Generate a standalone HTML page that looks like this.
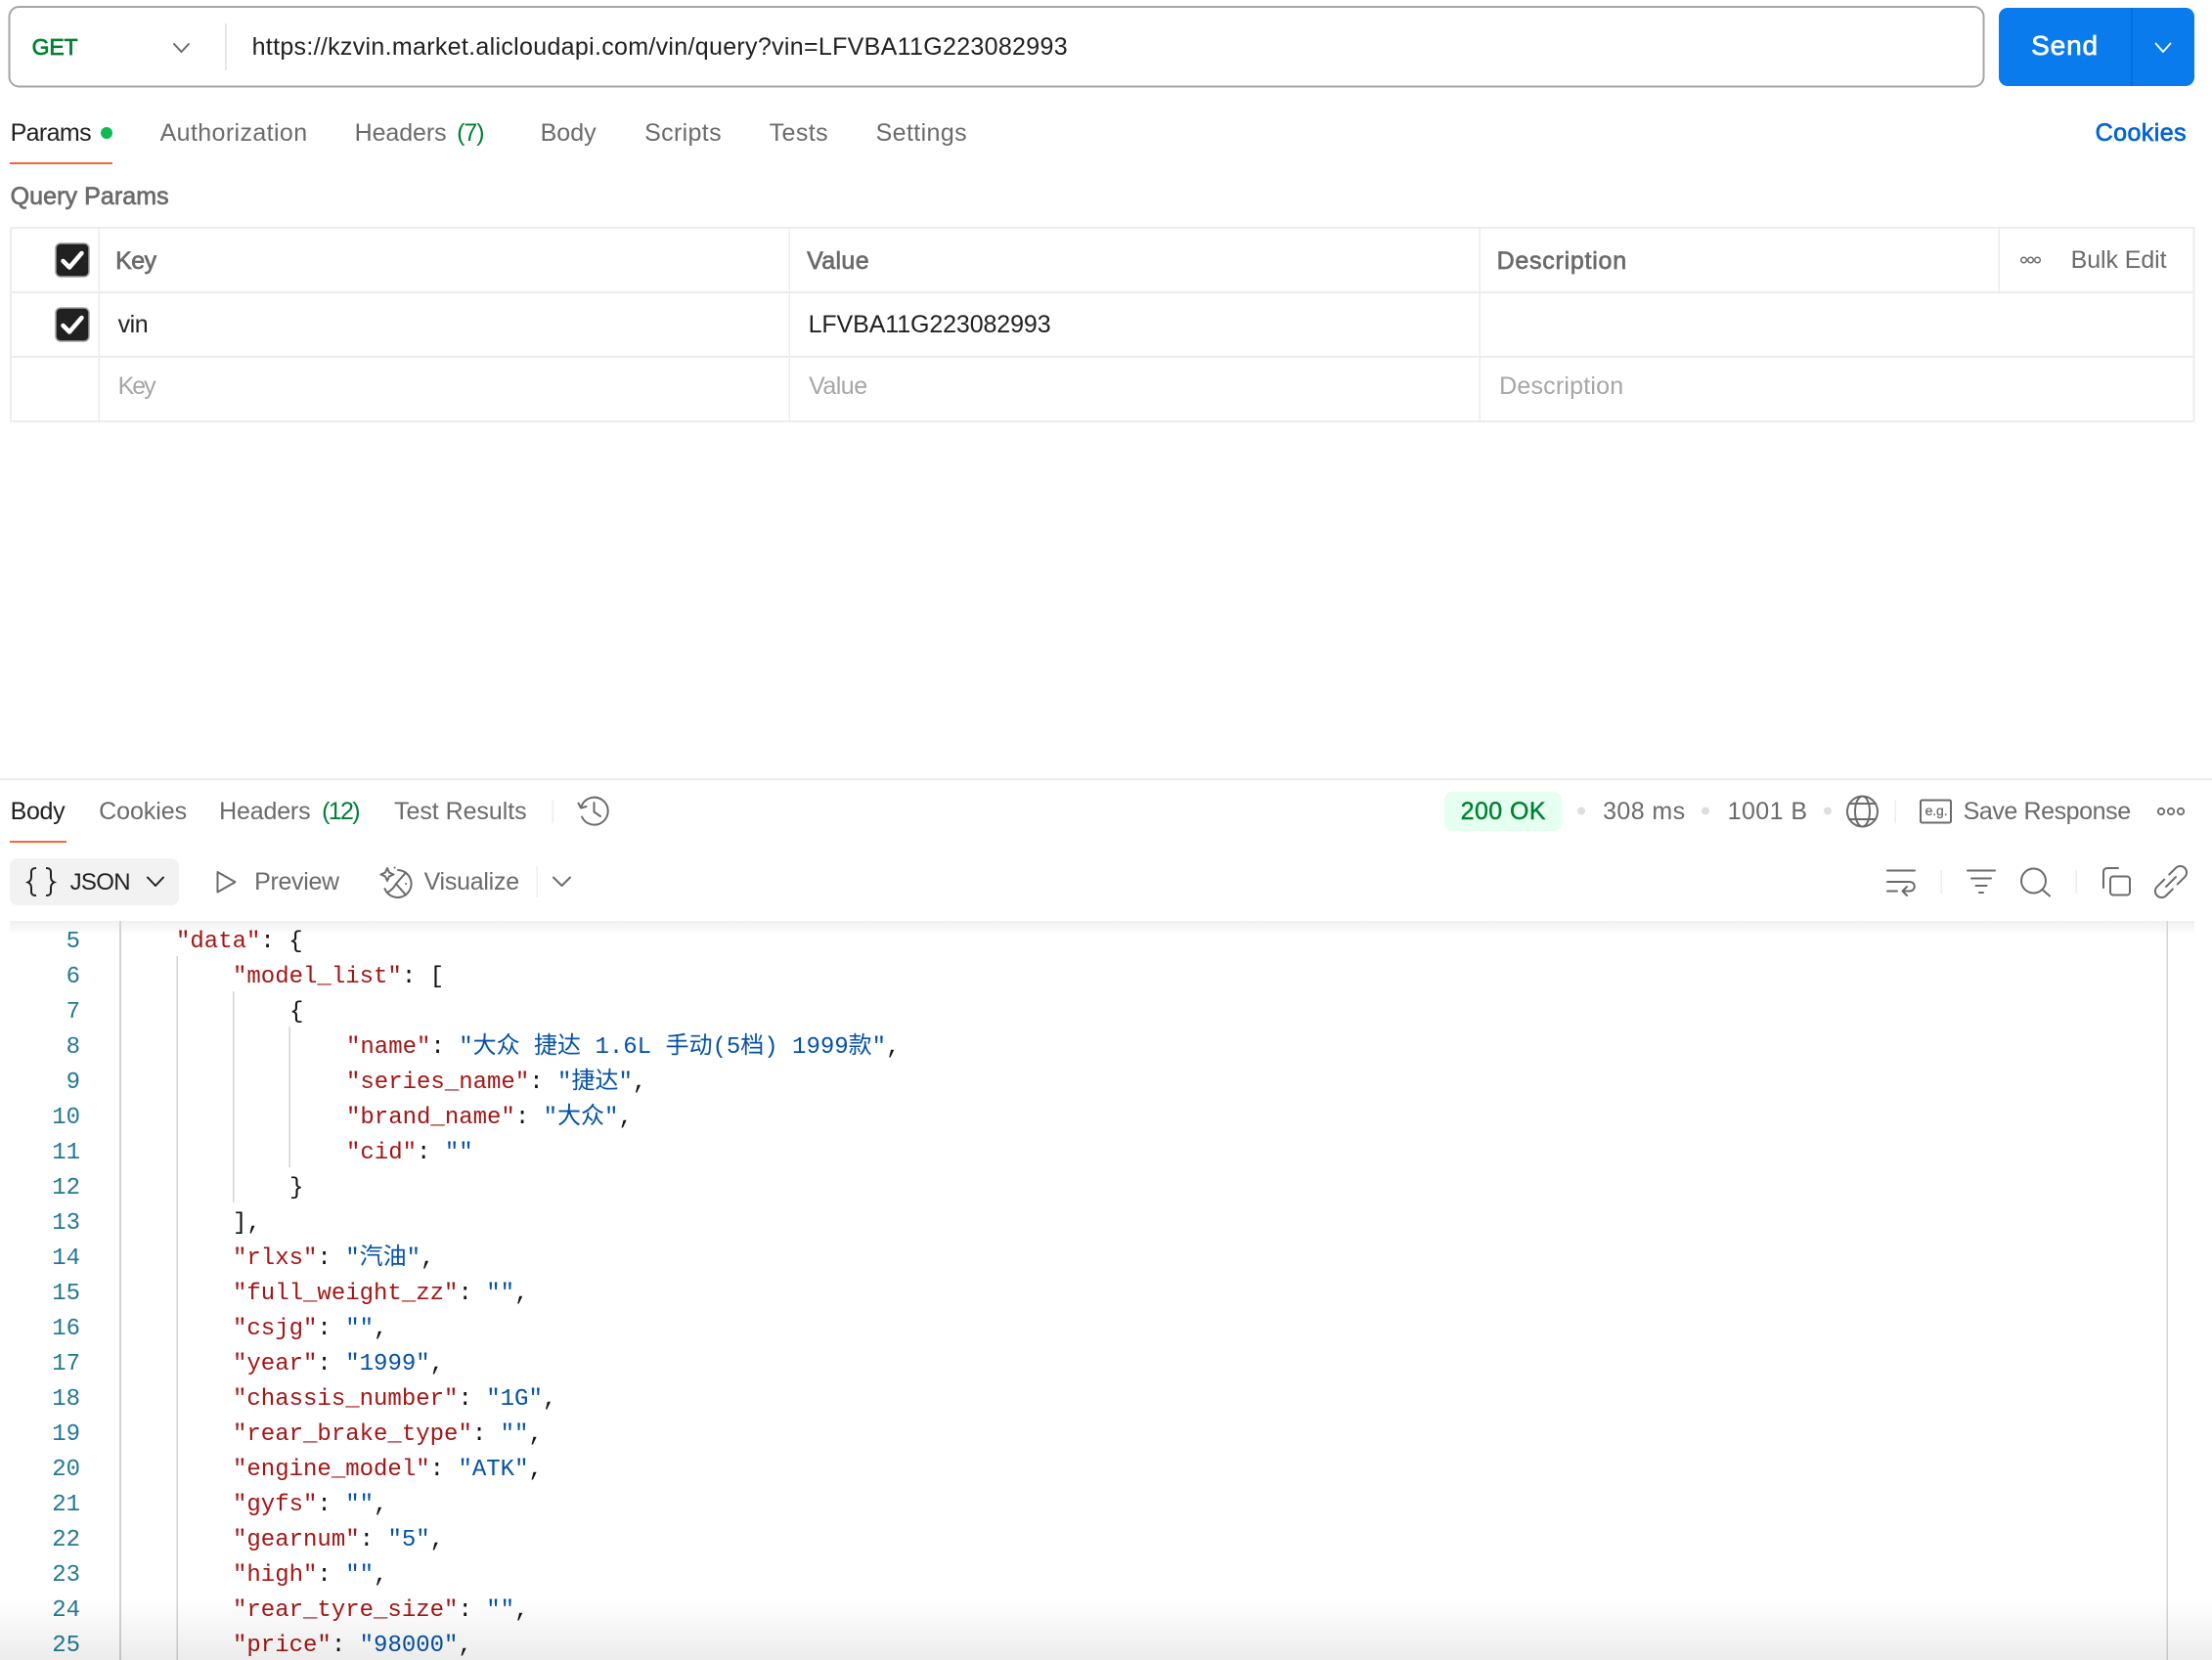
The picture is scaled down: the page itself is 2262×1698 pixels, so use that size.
<!DOCTYPE html>
<html lang="en">
<head>
<meta charset="utf-8">
<title>Postman request</title>
<style>
html,body{margin:0;padding:0;background:#fff;width:2262px;height:1698px;overflow:hidden}
svg{display:block}
text{font-family:"Liberation Sans","Noto Sans CJK SC",sans-serif;font-size:25px;white-space:pre;transform:translateX(-.4px)}
.n{fill:#6b6b6b}
.d{fill:#212121}
.g{fill:#007f31}
.p{fill:#a6a6a6}
.sb{fill:#6b6b6b;stroke:#6b6b6b;stroke-width:.7px}
.c text{font-family:"Liberation Mono","Noto Sans CJK SC",monospace;font-size:24px;fill:#111;transform:translateX(-1px)}
.c text.ln{fill:#237893;text-anchor:end;transform:none}
.k{fill:#a31515}
.v{fill:#0451a5}
.i{fill:none;stroke:#6b6b6b;stroke-width:2;stroke-linecap:round;stroke-linejoin:round}
.b{fill:#ededed}
.gd{fill:#d3d3d3}
</style>
</head>
<body>
<svg xmlns="http://www.w3.org/2000/svg" width="2262" height="1698" viewBox="0 0 2262 1698">
<defs>
<linearGradient id="top" x1="0" y1="0" x2="0" y2="1"><stop offset="0" stop-color="#000" stop-opacity=".06"/><stop offset="1" stop-color="#000" stop-opacity="0"/></linearGradient>
<linearGradient id="bot" x1="0" y1="0" x2="0" y2="1"><stop offset="0" stop-color="#000" stop-opacity="0"/><stop offset="1" stop-color="#000" stop-opacity=".075"/></linearGradient>
</defs>
<rect width="2262" height="1698" fill="#fff"/>

<!-- URL bar -->
<rect x="9.5" y="7" width="2019" height="81.5" rx="10" fill="#fff" stroke="#a6a6a6" stroke-width="2"/>
<text x="33" y="56" class="g" stroke="#007f31" stroke-width=".7" style="font-size:23px" textLength="47">GET</text>
<path d="M178 45l7.500 8 7.500-8" class="i" stroke-width="1.800"/>
<rect x="230" y="24" width="2" height="48" fill="#e6e6e6"/>
<text x="258" y="56" class="d" textLength="834">https://kzvin.market.alicloudapi.com/vin/query?vin=LFVBA11G223082993</text>

<!-- Send -->
<rect x="2044" y="8" width="200" height="80" rx="9" fill="#097bed"/>
<rect x="2179" y="8" width="1.500" height="80" fill="#0869cf"/>
<text x="2077.500" y="56" fill="#fff" stroke="#fff" stroke-width=".7" style="font-size:28px" textLength="68">Send</text>
<path d="M2204.500 44.500l7.500 8.500 7.500-8.500" fill="none" stroke="#fff" stroke-width="1.800" stroke-linecap="round" stroke-linejoin="round"/>

<!-- Request tabs -->
<text x="11" y="144" class="d" textLength="83">Params</text>
<circle cx="109" cy="136" r="6" fill="#0cbb52"/>
<rect x="10" y="166" width="105" height="2" fill="#f2693a"/>
<text x="164" y="144" class="n" textLength="150.500">Authorization</text>
<text x="363" y="144" class="n" textLength="94">Headers</text>
<text x="467.500" y="144" class="g" textLength="28.500">(7)</text>
<text x="553" y="144" class="n" textLength="57">Body</text>
<text x="659.500" y="144" class="n" textLength="78.500">Scripts</text>
<text x="787" y="144" class="n" textLength="60">Tests</text>
<text x="896" y="144" class="n" textLength="93">Settings</text>
<text x="2143" y="144" fill="#0265d2" stroke="#0265d2" stroke-width=".7" textLength="93">Cookies</text>

<text x="11" y="209" class="sb" textLength="162">Query Params</text>

<!-- Params table -->
<g>
<rect x="10" y="232" width="2234" height="2" class="b"/>
<rect x="10" y="298" width="2234" height="2" class="b"/>
<rect x="10" y="364" width="2234" height="2" class="b"/>
<rect x="10" y="430" width="2234" height="2" class="b"/>
<rect x="10" y="232" width="2" height="200" class="b"/>
<rect x="2242.500" y="232" width="2" height="200" class="b"/>
<rect x="100.500" y="232" width="1.500" height="200" class="b"/>
<rect x="806.500" y="232" width="1.500" height="200" class="b"/>
<rect x="1512.500" y="232" width="1.500" height="200" class="b"/>
<rect x="2043.500" y="232" width="1.500" height="66" class="b"/>
</g>
<rect x="57" y="249" width="34" height="34" rx="5" fill="#212121" stroke="#a0a0a0" stroke-width="1.500"/>
<path d="M64.500 267l6.500 6.500L83.500 259" fill="none" stroke="#fff" stroke-width="4.500" stroke-linecap="round" stroke-linejoin="round"/>
<rect x="57" y="315" width="34" height="34" rx="5" fill="#212121" stroke="#a0a0a0" stroke-width="1.500"/>
<path d="M64.500 333l6.500 6.500L83.500 325" fill="none" stroke="#fff" stroke-width="4.500" stroke-linecap="round" stroke-linejoin="round"/>

<text x="118.500" y="275" class="sb" textLength="42">Key</text>
<text x="825.500" y="275" class="sb" textLength="63.500">Value</text>
<text x="1531" y="275" class="sb" textLength="132.500">Description</text>
<g fill="none" stroke="#6b6b6b" stroke-width="1.500">
<circle cx="2069.500" cy="266" r="2.800"/><circle cx="2076.500" cy="266" r="2.800"/><circle cx="2083.500" cy="266" r="2.800"/>
</g>
<text x="2118" y="274" class="n" textLength="98">Bulk Edit</text>

<text x="121" y="340" class="d" textLength="31">vin</text>
<text x="827" y="340" class="d" textLength="248">LFVBA11G223082993</text>

<text x="121" y="403" class="p" textLength="39">Key</text>
<text x="827.500" y="403" class="p" textLength="60">Value</text>
<text x="1533.500" y="403" class="p" textLength="127">Description</text>

<!-- Response header -->
<rect x="0" y="796" width="2262" height="2" class="b"/>
<text x="11" y="838" class="d" textLength="56">Body</text>
<rect x="10" y="860" width="58" height="2" fill="#f2693a"/>
<text x="101.500" y="838" class="n" textLength="90">Cookies</text>
<text x="224.500" y="838" class="n" textLength="93.500">Headers</text>
<text x="329.500" y="838" class="g" textLength="39.500">(12)</text>
<text x="403.500" y="838" class="n" textLength="135.500">Test Results</text>
<rect x="564.500" y="818" width="1.500" height="24" class="b"/>
<path d="M595 835.500A14 14 0 1 0 594.500 825M591.500 821.500l2.500 5 5.500-1.500M607.500 821v9.500l6.500 4.500" class="i"/>

<rect x="1477" y="810" width="120" height="40" rx="8" fill="#e5fff0"/>
<text x="1494" y="838" fill="#007f31" stroke="#007f31" stroke-width=".4" textLength="87">200 OK</text>
<circle cx="1617" cy="829.500" r="4" fill="#dedede"/>
<text x="1639.500" y="838" class="n" textLength="84">308 ms</text>
<circle cx="1744" cy="829.500" r="4" fill="#dedede"/>
<text x="1767" y="838" class="n" textLength="81.500">1001 B</text>
<circle cx="1869" cy="829.500" r="4" fill="#dedede"/>
<g class="i">
<circle cx="1904.500" cy="830" r="15.500"/>
<ellipse cx="1904.500" cy="830" rx="7.500" ry="15.500"/>
<path d="M1891 822h27M1891 838h27"/>
</g>
<rect x="1937.500" y="818" width="1.500" height="24" class="b"/>
<rect x="1964" y="818.500" width="31" height="23" rx="1.500" class="i"/>
<text x="1969" y="834" fill="#6b6b6b" stroke="#6b6b6b" stroke-width=".3" style="font-size:14px" textLength="23">e.g.</text>
<text x="2008" y="838" class="n" textLength="171.500">Save Response</text>
<g fill="none" stroke="#6b6b6b" stroke-width="1.800">
<circle cx="2210" cy="830" r="3.200"/><circle cx="2220" cy="830" r="3.200"/><circle cx="2230" cy="830" r="3.200"/>
</g>

<!-- Response toolbar -->
<rect x="10" y="878" width="173" height="48" rx="8" fill="#f2f2f2"/>
<path d="M37 888c-3.500 0-5 1-5 4v5c0 3-1 4.500-3.500 5.500 2.500 1 3.500 2.500 3.500 5.500v4c0 3 1.500 4 5 4M47 888c3.500 0 5 1 5 4v5c0 3 1 4.500 3.500 5.500-2.500 1-3.500 2.500-3.500 5.500v4c0 3-1.500 4-5 4" fill="none" stroke="#212121" stroke-width="2"/>
<text x="72" y="910" class="d" style="font-size:24px" textLength="62">JSON</text>
<path d="M151 897.500l8 8.500 8-8.500" fill="none" stroke="#212121" stroke-width="2" stroke-linecap="round" stroke-linejoin="round"/>
<path d="M222.500 892v20.500l18-10.200z" class="i"/>
<text x="260.500" y="910" class="n" textLength="87">Preview</text>
<g class="i">
<path d="M407 890A14 14 0 1 1 393.500 909"/>
<path d="M396 888l2 4.500 4.500 2-4.500 2-2 4.500-2-4.500-4.500-2 4.500-2z"/>
<path d="M403.500 887.500h.1"/>
<path d="M415 892.500L405 904 415 915.500M396 913c4-2 6.500-4.500 9-9M415 904h.1"/>
</g>
<text x="434" y="910" class="n" textLength="97.500">Visualize</text>
<rect x="548.500" y="886" width="1.500" height="32" class="b"/>
<path d="M566 897.500l8.500 8.500 8.500-8.500" class="i"/>

<g class="i">
<path d="M1930 890.500h28M1930 902h22.500c7 0 7 9.500 0 9.500h-6.500M1950 907l-4.500 4.500 4.500 4.500M1930 911.500h10"/>
</g>
<rect x="1984.500" y="890" width="1.500" height="24" class="b"/>
<g class="i">
<path d="M2012 890.500h28M2016 898.500h20M2020.500 906h11M2024 913h4"/>
</g>
<g class="i">
<circle cx="2079.500" cy="901" r="12.500"/>
<path d="M2088.500 910l7.500 6.500"/>
</g>
<rect x="2122.500" y="890" width="1.500" height="24" class="b"/>
<g class="i">
<path d="M2151 908v-16c0-2.500 1.500-4 4-4h11"/>
<rect x="2158" y="896.500" width="20" height="19" rx="3"/>
</g>
<g class="i" transform="rotate(-45 2220 902)">
<path d="M2217 895.500h-10.500a6.500 6.500 0 0 0 0 13h9.500M2224 895.500h9.500a6.500 6.500 0 0 1 0 13H2223M2213 902h14"/>
</g>

<!-- Editor shadow + guides -->
<rect x="10" y="942" width="2234" height="14" fill="url(#top)"/>
<rect x="122" y="942" width="2" height="756" class="gd"/>
<rect x="180.500" y="978" width="1.500" height="720" class="gd"/>
<rect x="238" y="1014" width="1.500" height="216" class="gd"/>
<rect x="295.500" y="1050" width="1.500" height="144" class="gd"/>
<rect x="2215.500" y="942" width="1.500" height="756" fill="#d6d6d6"/>

<!-- Code -->
<g class="c">
<text class="ln" x="82" y="969">5</text>
<text class="ln" x="82" y="1005">6</text>
<text class="ln" x="82" y="1041">7</text>
<text class="ln" x="82" y="1077">8</text>
<text class="ln" x="82" y="1113">9</text>
<text class="ln" x="82" y="1149">10</text>
<text class="ln" x="82" y="1185">11</text>
<text class="ln" x="82" y="1221">12</text>
<text class="ln" x="82" y="1257">13</text>
<text class="ln" x="82" y="1293">14</text>
<text class="ln" x="82" y="1329">15</text>
<text class="ln" x="82" y="1365">16</text>
<text class="ln" x="82" y="1401">17</text>
<text class="ln" x="82" y="1437">18</text>
<text class="ln" x="82" y="1473">19</text>
<text class="ln" x="82" y="1509">20</text>
<text class="ln" x="82" y="1545">21</text>
<text class="ln" x="82" y="1581">22</text>
<text class="ln" x="82" y="1617">23</text>
<text class="ln" x="82" y="1653">24</text>
<text class="ln" x="82" y="1689">25</text>

<text x="181" y="969"><tspan class="k">"data"</tspan>: {</text>
<text x="239" y="1005"><tspan class="k">"model_list"</tspan>: [</text>
<text x="297" y="1041">{</text>
<text x="355" y="1077"><tspan class="k">"name"</tspan>: <tspan class="v">"大众 捷达 1.6L 手动(5档) 1999款"</tspan>,</text>
<text x="355" y="1113"><tspan class="k">"series_name"</tspan>: <tspan class="v">"捷达"</tspan>,</text>
<text x="355" y="1149"><tspan class="k">"brand_name"</tspan>: <tspan class="v">"大众"</tspan>,</text>
<text x="355" y="1185"><tspan class="k">"cid"</tspan>: <tspan class="v">""</tspan></text>
<text x="297" y="1221">}</text>
<text x="239" y="1257">],</text>
<text x="239" y="1293"><tspan class="k">"rlxs"</tspan>: <tspan class="v">"汽油"</tspan>,</text>
<text x="239" y="1329"><tspan class="k">"full_weight_zz"</tspan>: <tspan class="v">""</tspan>,</text>
<text x="239" y="1365"><tspan class="k">"csjg"</tspan>: <tspan class="v">""</tspan>,</text>
<text x="239" y="1401"><tspan class="k">"year"</tspan>: <tspan class="v">"1999"</tspan>,</text>
<text x="239" y="1437"><tspan class="k">"chassis_number"</tspan>: <tspan class="v">"1G"</tspan>,</text>
<text x="239" y="1473"><tspan class="k">"rear_brake_type"</tspan>: <tspan class="v">""</tspan>,</text>
<text x="239" y="1509"><tspan class="k">"engine_model"</tspan>: <tspan class="v">"ATK"</tspan>,</text>
<text x="239" y="1545"><tspan class="k">"gyfs"</tspan>: <tspan class="v">""</tspan>,</text>
<text x="239" y="1581"><tspan class="k">"gearnum"</tspan>: <tspan class="v">"5"</tspan>,</text>
<text x="239" y="1617"><tspan class="k">"high"</tspan>: <tspan class="v">""</tspan>,</text>
<text x="239" y="1653"><tspan class="k">"rear_tyre_size"</tspan>: <tspan class="v">""</tspan>,</text>
<text x="239" y="1689"><tspan class="k">"price"</tspan>: <tspan class="v">"98000"</tspan>,</text>
</g>

<!-- Bottom fade -->
<rect x="0" y="1635" width="2262" height="63" fill="url(#bot)"/>
</svg>
</body>
</html>
